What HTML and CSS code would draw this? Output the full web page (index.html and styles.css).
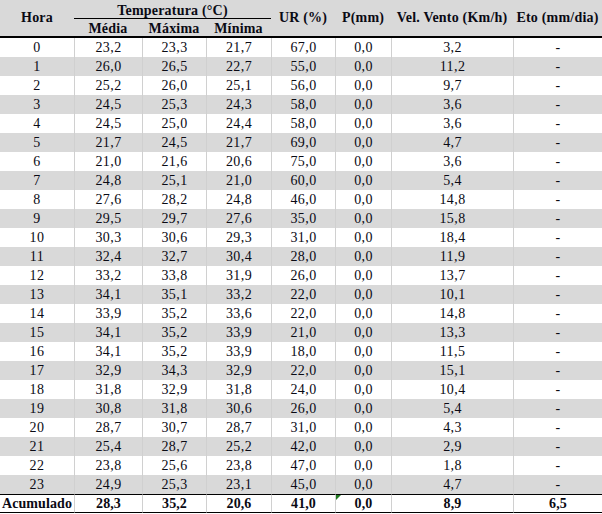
FILE: index.html
```html
<!DOCTYPE html>
<html lang="pt">
<head>
<meta charset="utf-8">
<title>Dados horários</title>
<link rel="stylesheet" href="styles.css">
</head>
<body>
<table class="data">
  <colgroup>
    <col class="c-hora"><col class="c-med"><col class="c-max"><col class="c-min"><col class="c-ur"><col class="c-p"><col class="c-vel"><col class="c-eto">
  </colgroup>
  <thead>
    <tr class="h1">
      <th rowspan="2" class="hb">Hora</th>
      <th colspan="3" class="temp">Temperatura (°C)</th>
      <th rowspan="2" class="hb">UR (%)</th>
      <th rowspan="2" class="hb">P(mm)</th>
      <th rowspan="2" class="hb">Vel. Vento (Km/h)</th>
      <th rowspan="2" class="hb">Eto (mm/dia)</th>
    </tr>
    <tr class="h2">
      <th class="hb sub">Média</th>
      <th class="hb sub">Máxima</th>
      <th class="hb sub">Mínima</th>
    </tr>
  </thead>
  <tbody>
    <tr><td>0</td><td>23,2</td><td>23,3</td><td>21,7</td><td>67,0</td><td>0,0</td><td>3,2</td><td>-</td></tr>
    <tr><td>1</td><td>26,0</td><td>26,5</td><td>22,7</td><td>55,0</td><td>0,0</td><td>11,2</td><td>-</td></tr>
    <tr><td>2</td><td>25,2</td><td>26,0</td><td>25,1</td><td>56,0</td><td>0,0</td><td>9,7</td><td>-</td></tr>
    <tr><td>3</td><td>24,5</td><td>25,3</td><td>24,3</td><td>58,0</td><td>0,0</td><td>3,6</td><td>-</td></tr>
    <tr><td>4</td><td>24,5</td><td>25,0</td><td>24,4</td><td>58,0</td><td>0,0</td><td>3,6</td><td>-</td></tr>
    <tr><td>5</td><td>21,7</td><td>24,5</td><td>21,7</td><td>69,0</td><td>0,0</td><td>4,7</td><td>-</td></tr>
    <tr><td>6</td><td>21,0</td><td>21,6</td><td>20,6</td><td>75,0</td><td>0,0</td><td>3,6</td><td>-</td></tr>
    <tr><td>7</td><td>24,8</td><td>25,1</td><td>21,0</td><td>60,0</td><td>0,0</td><td>5,4</td><td>-</td></tr>
    <tr><td>8</td><td>27,6</td><td>28,2</td><td>24,8</td><td>46,0</td><td>0,0</td><td>14,8</td><td>-</td></tr>
    <tr><td>9</td><td>29,5</td><td>29,7</td><td>27,6</td><td>35,0</td><td>0,0</td><td>15,8</td><td>-</td></tr>
    <tr><td>10</td><td>30,3</td><td>30,6</td><td>29,3</td><td>31,0</td><td>0,0</td><td>18,4</td><td>-</td></tr>
    <tr><td>11</td><td>32,4</td><td>32,7</td><td>30,4</td><td>28,0</td><td>0,0</td><td>11,9</td><td>-</td></tr>
    <tr><td>12</td><td>33,2</td><td>33,8</td><td>31,9</td><td>26,0</td><td>0,0</td><td>13,7</td><td>-</td></tr>
    <tr><td>13</td><td>34,1</td><td>35,1</td><td>33,2</td><td>22,0</td><td>0,0</td><td>10,1</td><td>-</td></tr>
    <tr><td>14</td><td>33,9</td><td>35,2</td><td>33,6</td><td>22,0</td><td>0,0</td><td>14,8</td><td>-</td></tr>
    <tr><td>15</td><td>34,1</td><td>35,2</td><td>33,9</td><td>21,0</td><td>0,0</td><td>13,3</td><td>-</td></tr>
    <tr><td>16</td><td>34,1</td><td>35,2</td><td>33,9</td><td>18,0</td><td>0,0</td><td>11,5</td><td>-</td></tr>
    <tr><td>17</td><td>32,9</td><td>34,3</td><td>32,9</td><td>22,0</td><td>0,0</td><td>15,1</td><td>-</td></tr>
    <tr><td>18</td><td>31,8</td><td>32,9</td><td>31,8</td><td>24,0</td><td>0,0</td><td>10,4</td><td>-</td></tr>
    <tr><td>19</td><td>30,8</td><td>31,8</td><td>30,6</td><td>26,0</td><td>0,0</td><td>5,4</td><td>-</td></tr>
    <tr><td>20</td><td>28,7</td><td>30,7</td><td>28,7</td><td>31,0</td><td>0,0</td><td>4,3</td><td>-</td></tr>
    <tr><td>21</td><td>25,4</td><td>28,7</td><td>25,2</td><td>42,0</td><td>0,0</td><td>2,9</td><td>-</td></tr>
    <tr><td>22</td><td>23,8</td><td>25,6</td><td>23,8</td><td>47,0</td><td>0,0</td><td>1,8</td><td>-</td></tr>
    <tr><td>23</td><td>24,9</td><td>25,3</td><td>23,1</td><td>45,0</td><td>0,0</td><td>4,7</td><td>-</td></tr>
  </tbody>
  <tfoot>
    <tr><td>Acumulado</td><td>28,3</td><td>35,2</td><td>20,6</td><td>41,0</td><td class="noted"><span class="note-mark"></span>0,0</td><td>8,9</td><td>6,5</td></tr>
  </tfoot>
</table>
</body>
</html>
```

FILE: styles.css
```css
html, body {
  margin: 0;
  padding: 0;
  background: #ffffff;
}

.data {
  width: 602px;
  table-layout: fixed;
  border-collapse: separate;
  border-spacing: 0;
  font-family: "Liberation Serif", "Times New Roman", serif;
  font-size: 14px;
  color: #0a0a14;
}

.c-hora { width: 74px; }
.c-med { width: 68px; }
.c-max { width: 64px; }
.c-min { width: 65px; }
.c-ur { width: 64px; }
.c-p { width: 56px; }
.c-vel { width: 122px; }
.c-eto { width: 89px; }

.data th,
.data td {
  box-sizing: border-box;
  padding: 0;
  text-align: center;
  vertical-align: middle;
  line-height: 16px;
  white-space: nowrap;
}

.data td {
  letter-spacing: 0.4px;
}

.data thead th {
  background: #d9d9d9;
  font-weight: bold;
  letter-spacing: 0.2px;
}

.data .temp {
  height: 19px;
  line-height: 14px;
  padding-top: 4px;
  border-bottom: 1px solid #000;
}

.data .sub {
  height: 19px;
  line-height: 14px;
  padding-top: 3px;
}

.data .hb {
  border-bottom: 2px solid #000;
}

.data tbody td {
  height: 19px;
}

.data tbody tr:nth-child(even) td {
  background: #d9d9d9;
}

.data td + td {
  border-left: 1px solid #d0d0d0;
}

.data tfoot td {
  height: 19px;
  font-weight: bold;
  letter-spacing: 0.1px;
  border-top: 1px solid #000;
  border-bottom: 1px solid #000;
}

.data .noted {
  position: relative;
}

.note-mark {
  position: absolute;
  left: 0;
  top: 0;
  width: 0;
  height: 0;
  border-top: 5px solid #217a21;
  border-right: 5px solid transparent;
}
```
